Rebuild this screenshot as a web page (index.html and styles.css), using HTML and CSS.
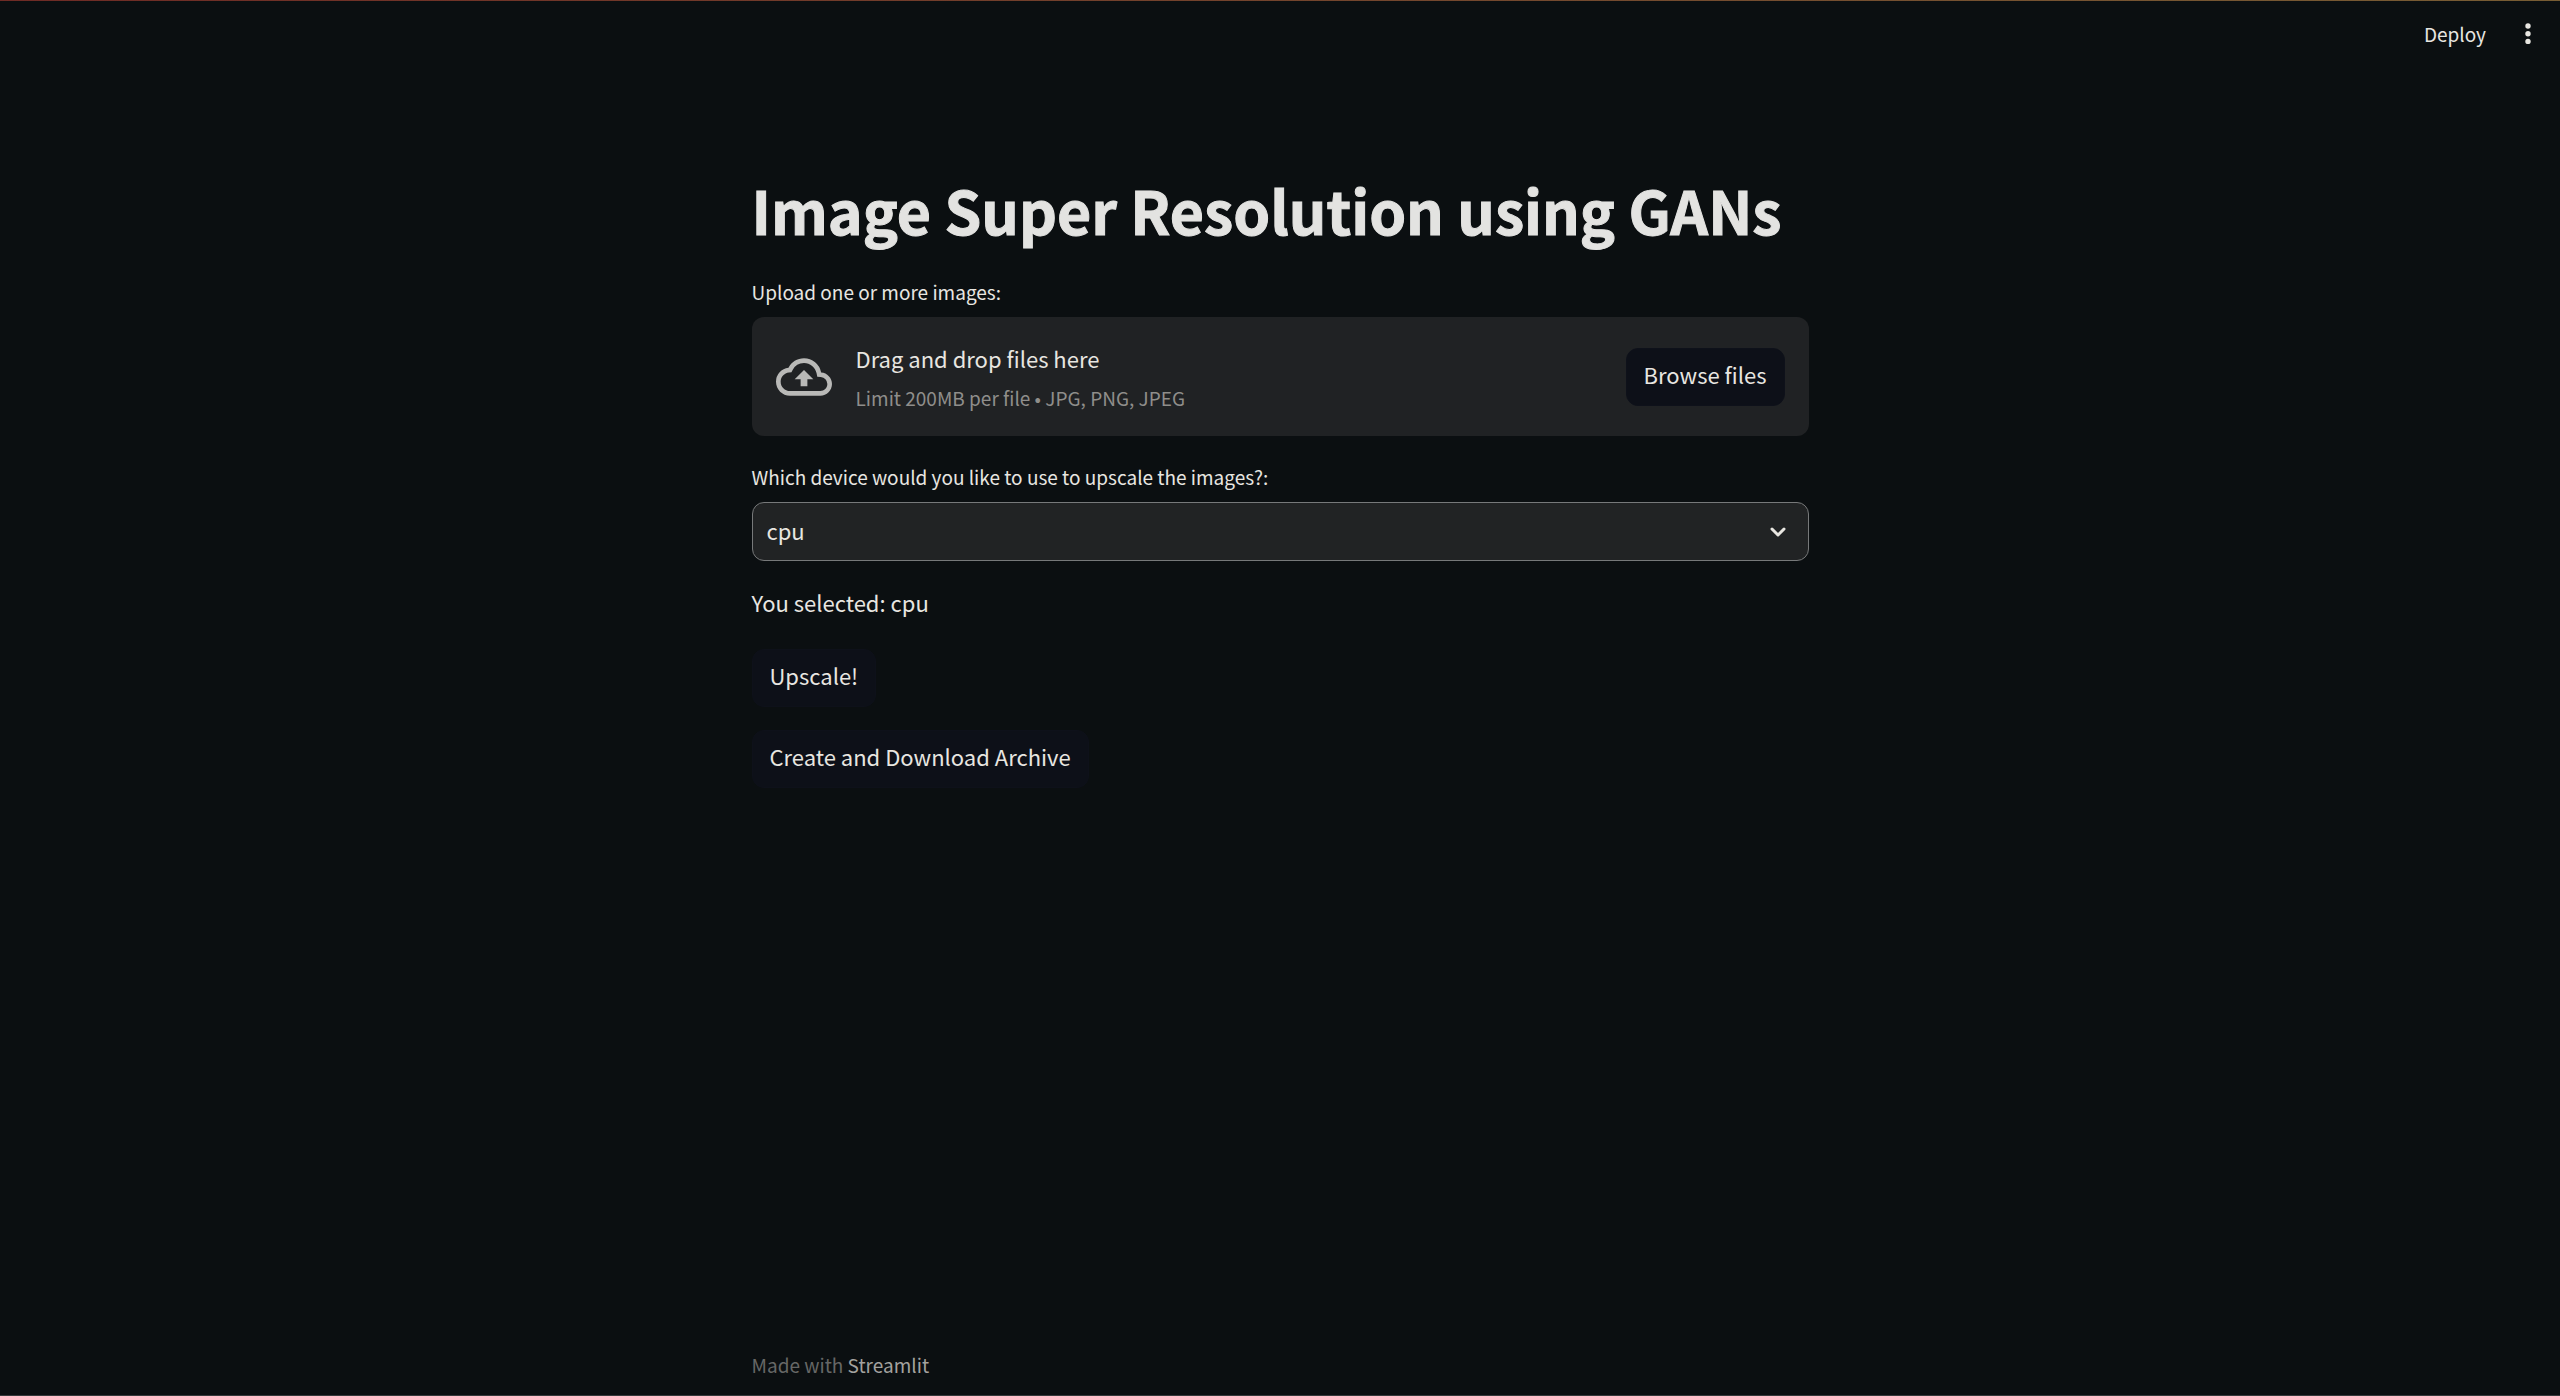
FILE: index.html
```html
<!DOCTYPE html>
<html lang="en">
<head>
<meta charset="utf-8">
<title>Image Super Resolution using GANs</title>
<link rel="stylesheet" href="styles.css">
</head>
<body>
<div class="app">
  <div class="decoration"></div>
  <header class="toolbar">
    <button class="toolbar-button" type="button">Deploy</button>
    <button class="menu-button" type="button" aria-label="Main menu">
      <svg width="36" height="36" viewBox="0 0 36 36" fill="currentColor"><circle cx="18" cy="10" r="2.7"/><circle cx="18" cy="17.7" r="2.7"/><circle cx="18" cy="25.4" r="2.7"/></svg>
    </button>
  </header>
  <main class="content">
    <h1 class="title">Image Super Resolution using GANs</h1>
    <section class="field">
      <label class="label" for="browse">Upload one or more images:</label>
      <div class="dropzone">
        <svg class="cloud" width="56" height="56" viewBox="0 0 24 24" fill="currentColor"><path d="M19.35 10.04A7.49 7.49 0 0 0 12 4C9.11 4 6.6 5.64 5.35 8.04A5.994 5.994 0 0 0 0 14c0 3.31 2.69 6 6 6h13c2.76 0 5-2.24 5-5 0-2.64-2.05-4.78-4.65-4.96zM19 18H6c-2.21 0-4-1.79-4-4 0-2.05 1.53-3.76 3.56-3.97l1.07-.11.5-.95A5.469 5.469 0 0 1 12 6c2.62 0 4.88 1.86 5.39 4.43l.3 1.5 1.53.11A2.98 2.98 0 0 1 22 15c0 1.65-1.35 3-3 3zM8 13h2.55v3h2.9v-3H16l-4-4z"/></svg>
        <div class="hints">
          <span class="hint">Drag and drop files here</span>
          <span class="limit">Limit 200MB per file • JPG, PNG, JPEG</span>
        </div>
        <button class="button" id="browse" type="button">Browse files</button>
      </div>
    </section>
    <section class="field">
      <label class="label" for="device">Which device would you like to use to upscale the images?:</label>
      <div class="select-wrap">
        <select class="select" id="device"><option>cpu</option></select>
        <svg class="chevron" width="16" height="10" viewBox="0 0 16 10" fill="none" stroke="currentColor" stroke-width="3" stroke-linecap="round" stroke-linejoin="round"><path d="M2 2l6 6 6-6"/></svg>
      </div>
    </section>
    <p class="result">You selected: cpu</p>
    <div class="actions">
      <button class="button" type="button">Upscale!</button>
      <button class="button" type="button">Create and Download Archive</button>
    </div>
  </main>
  <footer class="footer">Made with <a class="footer-link" href="#">Streamlit</a></footer>
</div>
</body>
</html>
```
FILE: styles.css
```css
* { box-sizing: border-box; }
body {
  margin: 0;
  background: #0b0f11;
  color: #e8e6e1;
  font-family: "Noto Sans CJK JP", "Noto Sans CJK SC", sans-serif;
  font-size: 22px;
  line-height: 36px;
}
button, select { font: inherit; color: inherit; }
.app {
  display: flex;
  flex-direction: column;
  min-height: 100vh;
  border-bottom: 1px solid #35393b;
}
.decoration {
  height: 1px;
  background: linear-gradient(90deg, #6f2b25, #785d34);
}
.toolbar {
  display: flex;
  justify-content: flex-end;
  align-items: center;
  gap: 24px;
  height: 66px;
  padding-right: 14px;
}
.toolbar-button, .menu-button {
  padding: 0;
  border: 0;
  background: none;
  font-size: 19px;
  line-height: 32px;
}
.menu-button svg { display: block; }
.content, .footer {
  width: 100%;
  max-width: 1057px;
  margin: 0 auto;
}
.content {
  flex: 1;
  padding-top: 103px;
}
.title {
  margin: 0 0 27px;
  color: #e3e3e1;
  font-size: 59px;
  line-height: 79px;
  font-weight: 700;
  -webkit-text-stroke: 1px currentColor;
}
.field { margin-bottom: 25px; }
.label {
  display: block;
  margin-bottom: 9px;
  font-size: 19px;
  line-height: 32px;
}
.dropzone {
  display: flex;
  align-items: center;
  height: 119px;
  padding: 0 24px;
  border-radius: 12px;
  background: #202224;
}
.cloud { color: #b9b9b7; }
.hints {
  display: flex;
  flex-direction: column;
  flex: 1;
  gap: 4px;
  padding: 2px 0 0 24px;
}
.limit { color: #8f8e8b; font-size: 19px; }
.button {
  padding: 8px 17px 14px;
  border: 1px solid #0e111a;
  border-radius: 12px;
  background: #0d1018;
  line-height: 34px;
}
.select-wrap { display: grid; align-items: center; }
.select {
  grid-area: 1 / 1;
  height: 59px;
  padding: 0 14px 3px;
  border: 1px solid #77797a;
  border-radius: 12px;
  background: #212324;
  appearance: none;
}
.chevron {
  grid-area: 1 / 1;
  justify-self: end;
  margin-right: 23px;
  pointer-events: none;
}
.result { margin: 0 0 30px; line-height: 33px; }
.actions {
  display: flex;
  flex-direction: column;
  align-items: flex-start;
  gap: 23px;
}
.footer {
  padding-bottom: 12px;
  color: #666766;
  font-size: 19px;
}
.footer-link { color: #a3a29f; text-decoration: none; }
```
